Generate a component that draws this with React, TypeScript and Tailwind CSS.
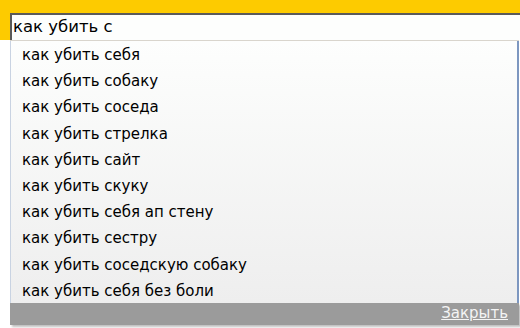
import React from "react";

const items = [
  "как убить себя",
  "как убить собаку",
  "как убить соседа",
  "как убить стрелка",
  "как убить сайт",
  "как убить скуку",
  "как убить себя ап стену",
  "как убить сестру",
  "как убить соседскую собаку",
  "как убить себя без боли",
];

export default function App() {
  return (
    <div
      className="w-[520px] h-[328px] bg-white overflow-hidden relative"
      style={{ fontFamily: "Tahoma, 'DejaVu Sans', sans-serif" }}
    >
      <div className="h-[40px] bg-[#fdcb00] pt-[13px] pl-[10px]">
        <div className="h-[27px] bg-[#fdfefd] border-t-2 border-l-2 border-t-[#5a5a5a] border-l-[#5a5a5a] pl-[1px] flex items-center text-[16.5px] text-black leading-none">
          как убить с
        </div>
      </div>
      <div className="ml-[10px] mr-[1px] border-t border-[#d9d5cd]">
        <div className="border-l border-r-2 border-l-[#c9d3e2] border-r-[#7d97c0] bg-gradient-to-b from-[#fdfefd] to-[#eeeeee]">
          {items.map((t) => (
            <div
              key={t}
              className="h-[26.2px] pt-[3px] flex items-center pl-[11px] text-[15px] text-black leading-none"
            >
              {t}
            </div>
          ))}
        </div>
        <div className="h-[22px] bg-[#9b9b9b] flex items-center justify-end pr-[11px] shadow-[2px_2px_2px_rgba(0,0,0,0.25)]">
          <span className="text-[15px] text-[#f4f4f4] underline leading-none">Закрыть</span>
        </div>
      </div>
    </div>
  );
}
